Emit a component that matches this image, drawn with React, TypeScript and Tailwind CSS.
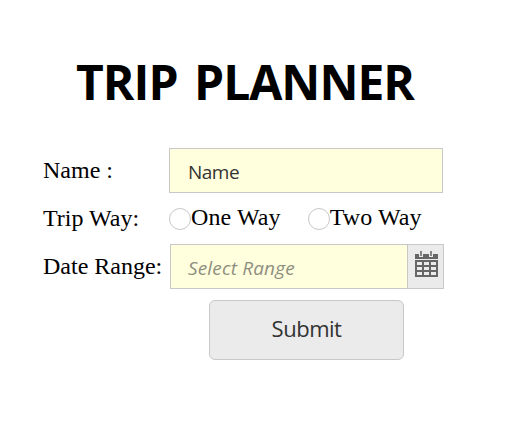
import type { ReactNode } from "react";

const sans = "font-['Open_Sans','Noto_Sans',sans-serif]";
const serif = "font-['Liberation_Serif','Times_New_Roman',serif]";

function Label({ children }: { children: ReactNode }) {
  return <span className="w-[126px] shrink-0 pb-0.5 whitespace-nowrap">{children}</span>;
}

function Radio({ label }: { label: string }) {
  return (
    <label className="flex items-center whitespace-nowrap">
      <span className="mt-0.5 size-[22px] shrink-0 rounded-full border border-[#c8c8c8] bg-white" />
      <span className="pb-0.5 tracking-[0.1px]">{label}</span>
    </label>
  );
}

function CalendarIcon() {
  return (
    <svg width="24" height="27" viewBox="0 0 24 27" shapeRendering="crispEdges">
      <path d="M0 3h4v3h4V3h6v3h4V3h5v5H0z" fill="#666" />
      <path d="M5 0h2v5H5zM15 0h2v5h-2z" fill="#858585" />
      <path
        fillRule="evenodd"
        d="M0 9h23v17H0zM2 11v3h5v-3zM9 11v3h5v-3zM16 11v3h5v-3zM2 16v3h5v-3zM9 16v3h5v-3zM16 16v3h5v-3zM2 21v3h5v-3zM9 21v3h5v-3zM16 21v3h5v-3z"
        fill="#666"
      />
    </svg>
  );
}

export default function App() {
  return (
    <main className={`h-[426px] w-[510px] overflow-hidden bg-white pt-[50px] pl-[43px] text-[24px] leading-7 text-black ${serif}`}>
      <h1 className={`ml-[33px] h-[98px] text-[48px] leading-[64px] font-bold tracking-[-1px] whitespace-nowrap [word-spacing:5px] ${sans}`}>
        TRIP PLANNER
      </h1>
      <form className="flex flex-col" onSubmit={(e) => e.preventDefault()}>
        <div className="flex h-[45px] items-center">
          <Label>Name :</Label>
          <input
            aria-label="Name"
            defaultValue="Name"
            className={`h-[45px] w-[274px] border border-[#c8c8c8] bg-[#ffffde] pt-0.5 pl-[18px] text-[19px] tracking-[-0.5px] text-[#333] outline-none ${sans}`}
          />
        </div>
        <div className="flex h-[51px] items-center">
          <Label>Trip Way:</Label>
          <div className="-mt-0.5 flex gap-[27px]">
            <Radio label="One Way" />
            <Radio label="Two Way" />
          </div>
        </div>
        <div className="flex h-[45px] items-center">
          <Label>Date Range:</Label>
          <div className="ml-px flex h-[45px] w-[274px] border border-[#c8c8c8] bg-[#ffffde]">
            <input
              aria-label="Date range"
              placeholder="Select Range"
              className={`w-[236px] pt-0.5 pl-[17px] text-[19px] tracking-[0.15px] italic outline-none placeholder:text-[#8f8f80] ${sans}`}
            />
            <button type="button" aria-label="Open calendar" className="flex w-9 items-start border-l border-[#c8c8c8] bg-[#ebebeb] pt-[6px] pl-[7px]">
              <CalendarIcon />
            </button>
          </div>
        </div>
        <button className={`mt-[11px] ml-[166px] h-[60px] w-[195px] rounded-md border border-[#c8c8c8] bg-[#ebebeb] pb-1 text-[22px] tracking-[-0.5px] text-[#333] ${sans}`}>
          Submit
        </button>
      </form>
    </main>
  );
}
